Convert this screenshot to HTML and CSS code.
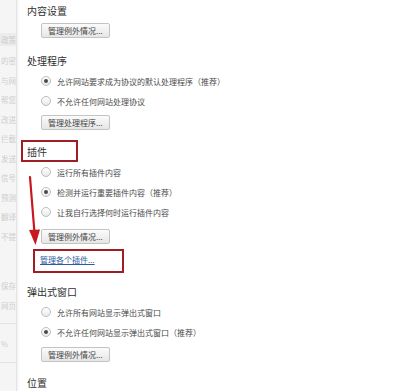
FILE: index.html
```html
<!DOCTYPE html>
<html lang="zh-CN">
<head>
<meta charset="utf-8">
<title>内容设置</title>
<link rel="stylesheet" href="styles.css">
</head>
<body>
<div class="page">
  <aside class="side">
    <div class="side-row sel">政策</div>
    <div class="side-row">的密</div>
    <div class="side-row">与网</div>
    <div class="side-row">帮您</div>
    <div class="side-row">改进</div>
    <div class="side-row">拦截</div>
    <div class="side-row">发送</div>
    <div class="side-row">信号</div>
    <div class="side-row">预测</div>
    <div class="side-row">翻译</div>
    <div class="side-row">不提</div>
    <div class="side-row gap">保存</div>
    <div class="side-row">网页</div>
    <div class="side-line"></div>
    <div class="side-row">%</div>
    <div class="side-line"></div>
  </aside>
  <main class="content">
    <section class="sec s1">
      <div class="heading">内容设置</div>
      <button class="btn b-tight">管理例外情况...</button>
    </section>
    <section class="sec s2">
      <div class="heading">处理程序</div>
      <div class="opt"><span class="radio on"></span><span>允许网站要求成为协议的默认处理程序（推荐）</span></div>
      <div class="opt"><span class="radio"></span><span>不允许任何网站处理协议</span></div>
      <button class="btn b-4">管理处理程序...</button>
    </section>
    <section class="sec s3">
      <div class="heading marked">插件<span class="mark mark-head"></span></div>
      <div class="opt"><span class="radio"></span><span>运行所有插件内容</span></div>
      <div class="opt"><span class="radio on"></span><span>检测并运行重要插件内容（推荐）</span></div>
      <div class="opt"><span class="radio"></span><span>让我自行选择何时运行插件内容</span></div>
      <button class="btn b-7">管理例外情况...</button>
      <div class="link-row"><a class="link" href="#">管理各个插件...</a><span class="mark mark-link"></span></div>
    </section>
    <section class="sec s4">
      <div class="heading">弹出式窗口</div>
      <div class="opt"><span class="radio"></span><span>允许所有网站显示弹出式窗口</span></div>
      <div class="opt"><span class="radio on"></span><span>不允许任何网站显示弹出式窗口（推荐）</span></div>
      <button class="btn b-5">管理例外情况...</button>
    </section>
    <section class="sec s5">
      <div class="heading last">位置</div>
    </section>
  </main>
  <svg class="arrow" width="60" height="260" viewBox="0 0 60 260" aria-hidden="true">
    <line x1="30" y1="177" x2="34.5" y2="233" stroke="#c9171e" stroke-width="2.2" stroke-linecap="round"/>
    <polygon points="29,230 40,229.5 35.5,245" fill="#c9171e"/>
  </svg>
</div>
</body>
</html>
```
FILE: styles.css
```css
html, body {
  margin: 0;
  padding: 0;
  background: #ffffff;
}
body {
  width: 406px;
  height: 391px;
  overflow: hidden;
  font-family: "Noto Sans CJK SC", "Noto Sans", sans-serif;
  color: #333333;
}
.page {
  position: relative;
  display: flex;
  width: 406px;
  height: 391px;
  overflow: hidden;
}
.side {
  width: 17px;
  flex: none;
  background: #f5f5f5;
  overflow: hidden;
  padding-top: 33px;
  box-sizing: border-box;
  border-right: 1px solid #e4e4e4;
  box-shadow: 1px 0 3px rgba(0, 0, 0, 0.07);
}
.side-row {
  height: 19.5px;
  line-height: 19.5px;
  font-size: 7.5px;
  color: #cdcdcd;
  white-space: nowrap;
  padding-left: 1px;
}
.side-row.sel {
  background: #ececec;
  height: 13px;
  line-height: 13px;
  margin-bottom: 5px;
}
.side-row.gap {
  margin-top: 30px;
}
.side-line {
  height: 1px;
  background: #e2e2e2;
  margin: 8px 0 10px;
}
.content {
  flex: 1;
  padding: 1px 0 0 10px;
  box-sizing: border-box;
}
.sec {
  display: flex;
  flex-direction: column;
  align-items: flex-start;
}
.s2 { margin-top: 13px; }
.s3 { margin-top: 12px; }
.s4 { margin-top: 14px; }
.s5 { margin-top: 15px; }
.heading {
  height: 20px;
  line-height: 20px;
  font-size: 10px;
  color: #303030;
  white-space: nowrap;
}
.heading.last {
  height: 12px;
  line-height: 12px;
}
.marked {
  position: relative;
}
.opt {
  height: 20px;
  display: flex;
  align-items: center;
  gap: 6px;
  padding-left: 14px;
  font-size: 8px;
  color: #4a4a4a;
  white-space: nowrap;
}
.radio {
  width: 10px;
  height: 10px;
  box-sizing: border-box;
  border-radius: 50%;
  border: 1px solid #bcbcbc;
  background: linear-gradient(#ffffff, #e9e9e9);
  display: flex;
  align-items: center;
  justify-content: center;
  flex: none;
}
.radio.on::after {
  content: "";
  width: 4px;
  height: 4px;
  border-radius: 50%;
  background: #4a4a4a;
}
.btn {
  display: block;
  height: 15px;
  margin-left: 14px;
  padding: 0 6px;
  box-sizing: border-box;
  font-family: inherit;
  font-size: 8px;
  line-height: 13px;
  color: #444444;
  border: 1px solid #c3c3c3;
  border-radius: 2px;
  background: linear-gradient(#fbfbfb, #e6e6e6);
  white-space: nowrap;
}
.b-tight { margin-top: 2px; }
.b-4 { margin-top: 4px; }
.b-7 { margin-top: 7px; }
.b-5 { margin-top: 5px; }
.link-row {
  position: relative;
  margin-top: 8px;
  padding-left: 13px;
  height: 16px;
  line-height: 16px;
  font-size: 8px;
}
.link {
  color: #2f5c9e;
  text-decoration: underline;
  white-space: nowrap;
}
.mark {
  position: absolute;
  border: 2px solid #9d1f25;
  box-sizing: border-box;
}
.mark-head {
  left: -6px;
  top: -2px;
  width: 57px;
  height: 22px;
}
.mark-link {
  left: 6px;
  top: -3px;
  width: 91px;
  height: 24px;
}
.arrow {
  position: absolute;
  left: 0;
  top: 0;
}
```
